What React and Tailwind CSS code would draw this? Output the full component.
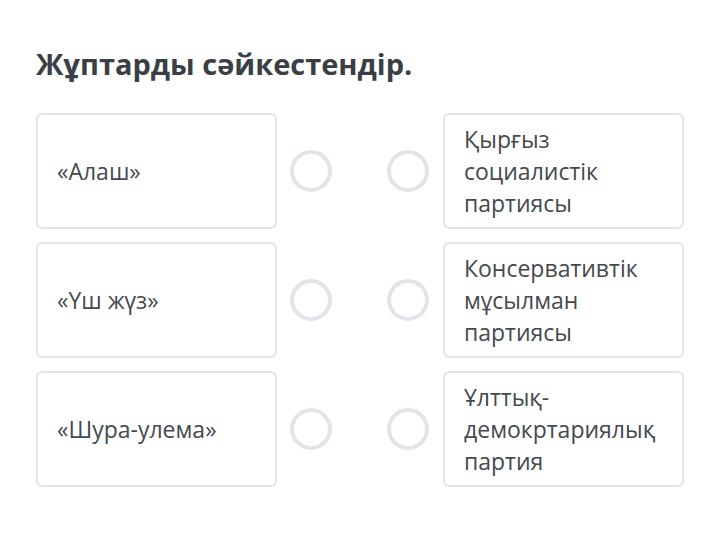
const rows = [
  { left: '«Алаш»', right: 'Қырғыз социалистік партиясы' },
  { left: '«Үш жүз»', right: 'Консервативтік мұсылман партиясы' },
  { left: '«Шура-улема»', right: 'Ұлттық-демокртариялық партия' },
];

function Circle() {
  return <div className="w-[42px] h-[42px] rounded-full border-[4px] border-[#e1e4e8]" />;
}

export default function App() {
  return (
    <div className="w-[701px] h-[550px] bg-white pl-[36px] pt-[44px] text-[#3c4047]" style={{ fontFamily: '"Open Sans", sans-serif' }}>
      <h1 className="text-[29px] font-bold leading-[40px] text-[#3a3f46]">Жұптарды сәйкестендір.</h1>
      <div className="mt-[29px] flex flex-col gap-[13px]">
        {rows.map((r, i) => (
          <div key={i} className="flex items-center">
            <div className="w-[241px] h-[116px] border-2 border-[#e4e4e4] rounded-[6px] flex items-center px-[19px] text-[23px] leading-[32px] text-[#45494e]">
              {r.left}
            </div>
            <div className="ml-[13px]"><Circle /></div>
            <div className="ml-[55px]"><Circle /></div>
            <div className="ml-[14px] w-[241px] h-[116px] border-2 border-[#e4e4e4] rounded-[6px] flex items-center px-[19px] text-[23px] leading-[32px] text-[#45494e]">
              <span className="block w-[200px]">{r.right}</span>
            </div>
          </div>
        ))}
      </div>
    </div>
  );
}
